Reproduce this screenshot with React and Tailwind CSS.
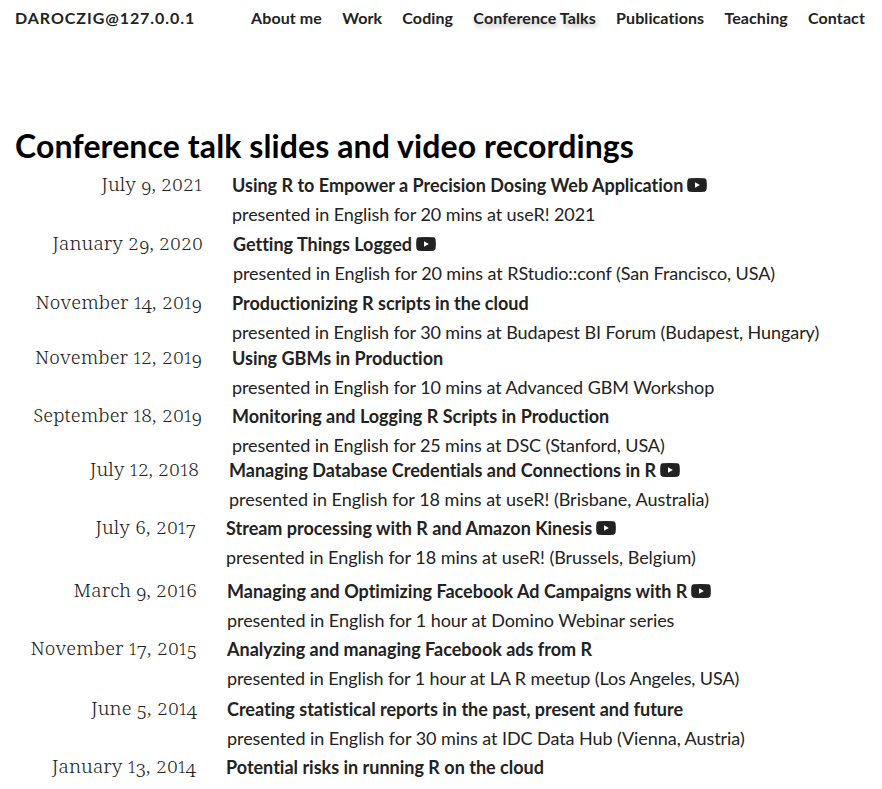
const talks = [
  { date: "July 9, 2021", title: "Using R to Empower a Precision Dosing Web Application", detail: "presented in English for 20 mins at useR! 2021", video: true, row: "h-[59px]", dateBox: "w-[202px]", track: "tracking-[-0.07px]" },
  { date: "January 29, 2020", title: "Getting Things Logged", detail: "presented in English for 20 mins at RStudio::conf (San Francisco, USA)", video: true, row: "h-[59px]", dateBox: "w-[203px]", track: "tracking-[-0.08px]" },
  { date: "November 14, 2019", title: "Productionizing R scripts in the cloud", detail: "presented in English for 30 mins at Budapest BI Forum (Budapest, Hungary)", row: "h-[55px]", dateBox: "w-[202px]", track: "tracking-[-0.08px]" },
  { date: "November 12, 2019", title: "Using GBMs in Production", detail: "presented in English for 10 mins at Advanced GBM Workshop", row: "h-[58px]", dateBox: "w-[202px]", track: "tracking-[-0.08px]" },
  { date: "September 18, 2019", title: "Monitoring and Logging R Scripts in Production", detail: "presented in English for 25 mins at DSC (Stanford, USA)", row: "h-[54px]", dateBox: "w-[202px]", track: "tracking-[-0.09px]" },
  { date: "July 12, 2018", title: "Managing Database Credentials and Connections in R", detail: "presented in English for 18 mins at useR! (Brisbane, Australia)", video: true, row: "h-[58px]", dateBox: "w-[199px]", track: "tracking-normal" },
  { date: "July 6, 2017", title: "Stream processing with R and Amazon Kinesis", detail: "presented in English for 18 mins at useR! (Brussels, Belgium)", video: true, row: "h-[63px]", dateBox: "w-[196px]", track: "tracking-[-0.035px]" },
  { date: "March 9, 2016", title: "Managing and Optimizing Facebook Ad Campaigns with R", detail: "presented in English for 1 hour at Domino Webinar series", video: true, row: "h-[58px]", dateBox: "w-[197px]", track: "tracking-[-0.055px]" },
  { date: "November 17, 2015", title: "Analyzing and managing Facebook ads from R", detail: "presented in English for 1 hour at LA R meetup (Los Angeles, USA)", row: "h-[60px]", dateBox: "w-[197px]", track: "tracking-[-0.1px]" },
  { date: "June 5, 2014", title: "Creating statistical reports in the past, present and future", detail: "presented in English for 30 mins at IDC Data Hub (Vienna, Austria)", row: "h-[58px]", dateBox: "w-[197px]", track: "tracking-[-0.06px]" },
  { date: "January 13, 2014", title: "Potential risks in running R on the cloud", row: "h-[30px]", dateBox: "w-[196px]" },
];

// Old-style figures: 0-2 sit at x-height, 3-5, 7 and 9 descend, 6 and 8 ascend.
function figureClass(digit) {
  if (digit === "1") return "inline-block w-[8px] text-center text-[15.5px]";
  if ("02".includes(digit)) return "inline-block w-[11px] scale-x-[1.2] text-center text-[15.5px]";
  if ("34579".includes(digit)) return "inline-block w-[10.5px] translate-y-[4px] text-center text-[19px]";
  return "inline-block w-[11px] text-center text-[19px]";
}

function TalkDate({ value }) {
  return [...value].map((char, i) =>
    /\d/.test(char) ? <span key={i} className={figureClass(char)}>{char}</span> : char
  );
}

function VideoIcon() {
  return (
    <svg viewBox="0 0 20 14" className="ml-1 inline-block h-[14px] w-5 align-[0px]" aria-hidden="true">
      <path fill="currentColor" fillRule="evenodd" d="M2.5.3Q10-.3 17.5.3 19.1.5 19.5 2.2 20.2 7 19.5 11.8 19.1 13.5 17.5 13.7 10 14.3 2.5 13.7.9 13.5.5 11.8-.2 7 .5 2.2.9.5 2.5.3ZM8 4.2v5.6l4.9-2.8Z" />
    </svg>
  );
}

export default function App() {
  return (
    <main className="h-[789px] w-[882px] overflow-hidden bg-white font-['Lato',sans-serif] text-[#222] [font-variant-ligatures:none]">
      <header className="flex h-[36px] items-center pl-[15px] pr-[17px] text-[16px] font-bold whitespace-nowrap">
        <span className="tracking-[0.95px]">DAROCZIG@127.0.0.1</span>
        <nav className="ml-auto flex gap-[20.2px] tracking-[0.1px]">
          <a>About me</a><a>Work</a><a>Coding</a>
          <a className="[text-shadow:2px_3px_5px_#bbb]">Conference Talks</a>
          <a>Publications</a><a>Teaching</a><a>Contact</a>
        </nav>
      </header>
      <h1 className="mt-[88px] ml-[15px] h-[47px] text-[32px] leading-[43px] font-bold tracking-[0.1px] whitespace-nowrap text-black">Conference talk slides and video recordings</h1>
      <section>
        {talks.map((talk) => (
          <article key={talk.date} className={`flex ${talk.row}`}>
            <time className={`h-[29px] shrink-0 text-right font-['Noto_Serif','Liberation_Serif',serif] text-[19px] leading-[27px] font-light tracking-[0.1px] whitespace-nowrap text-[#222] ${talk.dateBox}`}>
              <TalkDate value={talk.date} />
            </time>
            <div className="ml-[30px] text-[18px] leading-[29px] whitespace-nowrap">
              <h2 className="font-bold">{talk.title}{talk.video && <VideoIcon />}</h2>
              {talk.detail && <p className={talk.track}>{talk.detail}</p>}
            </div>
          </article>
        ))}
      </section>
    </main>
  );
}
